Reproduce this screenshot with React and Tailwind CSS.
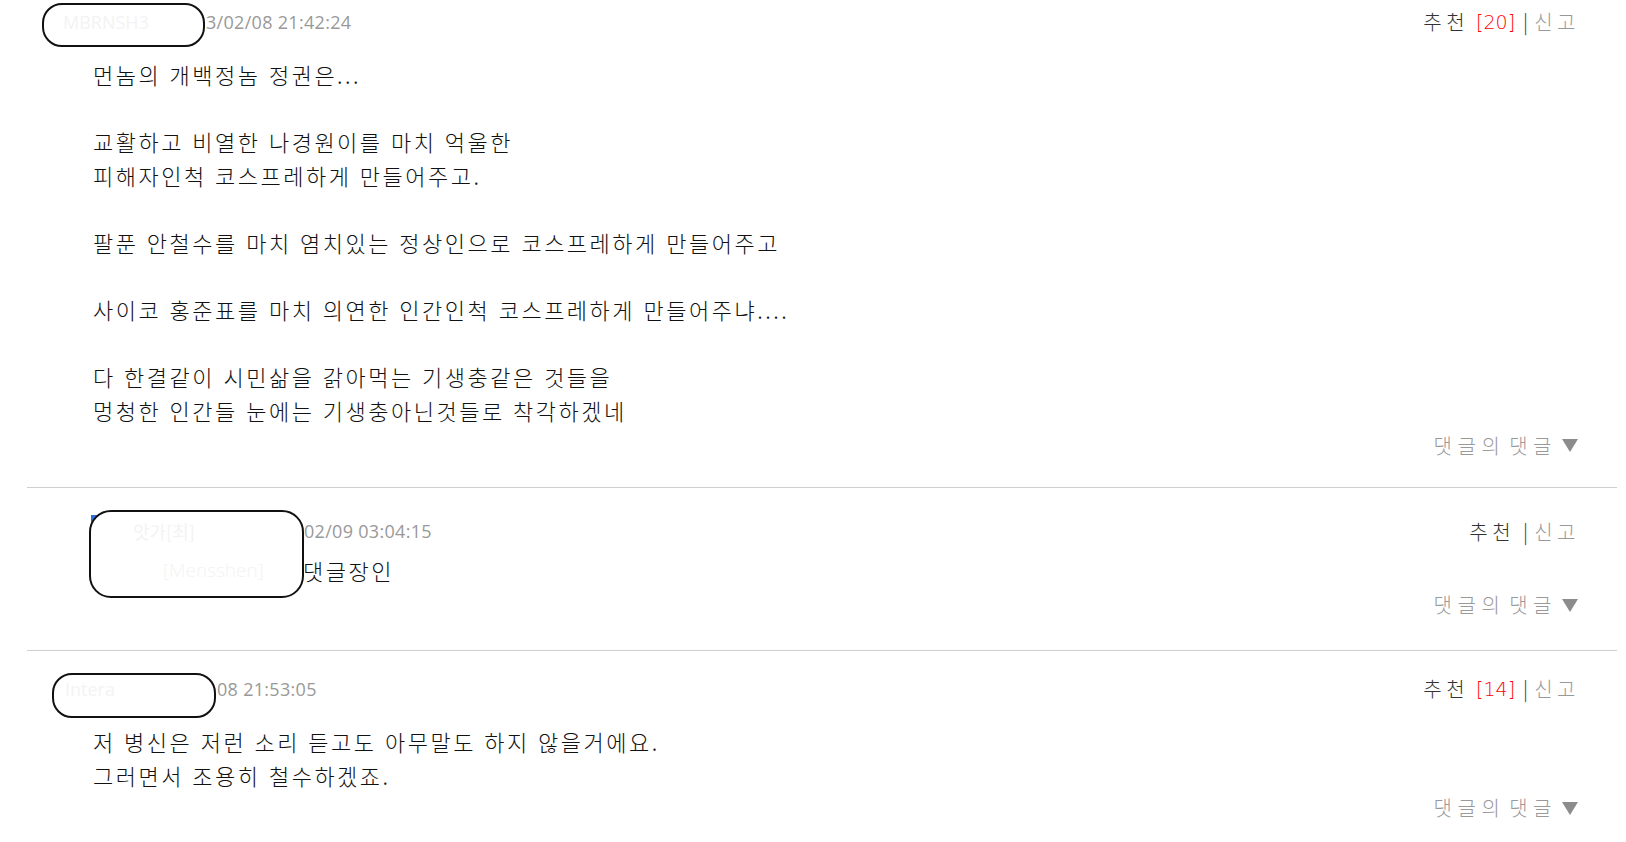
import { Fragment } from "react";

// 댓글 하단 "댓글의 댓글" 토글
function ReplyToggle({ className }) {
  return (
    <div className={"flex h-[30px] items-center justify-end pr-[39px] " + className}>
      <span className="text-[20px] font-light tracking-[5.5px] [word-spacing:-6px] text-[#999] font-['Noto_Sans_CJK_KR',sans-serif]">
        댓글의 댓글
      </span>
      <svg width="16" height="13" viewBox="0 0 16 13" className="ml-[5px]">
        <polygon points="0,0 16,0 8,13" fill="#8c8c8c" />
      </svg>
    </div>
  );
}

// 추천 / 신고
function Recommend({ count }) {
  return (
    <div className="ml-auto flex items-center pr-[37px] text-[20px] font-light font-['Noto_Sans_CJK_KR',sans-serif]">
      <span className="tracking-[4.5px] text-[#333]">추천</span>
      {count != null && (
        <span className="ml-[7px] text-[19px] text-[#ff0000] font-['DejaVu_Sans',sans-serif] font-extralight">
          [{count}]
        </span>
      )}
      <span className="ml-[8px] text-[#333]">|</span>
      <span className="ml-[6px] tracking-[4.5px] text-[#999]">신고</span>
    </div>
  );
}

// 가려진 아이디 박스
function Mask({ className }) {
  return <div className={"absolute z-10 rounded-[20px] border-2 border-[#111] bg-white " + className} />;
}

export default function App() {
  const first = [
    "먼놈의 개백정놈 정권은...",
    "",
    "교활하고 비열한 나경원이를 마치 억울한",
    "피해자인척 코스프레하게 만들어주고.",
    "",
    "팔푼 안철수를 마치 염치있는 정상인으로 코스프레하게 만들어주고",
    "",
    "사이코 홍준표를 마치 의연한 인간인척 코스프레하게 만들어주냐....",
    "",
    "다 한결같이 시민삶을 갉아먹는 기생충같은 것들을",
    "멍청한 인간들 눈에는 기생충아닌것들로 착각하겠네",
  ];
  const third = ["저 병신은 저런 소리 듣고도 아무말도 하지 않을거에요.", "그러면서 조용히 철수하겠죠."];

  const body =
    "pl-[66px] text-[22px] font-light leading-[33.6px] tracking-[2.5px] [word-spacing:1px] text-[#111] font-['Noto_Sans_CJK_KR',sans-serif]";

  return (
    <div className="h-[842px] w-[1626px] overflow-hidden bg-white">
      <div className="ml-[27px] w-[1590px]">
        {/* --- 댓글 1 --- */}
        <div className="relative border-b border-[#cfcfcf] pt-[7px] pb-[26px]">
          <Mask className="left-[15px] top-[3px] h-[44px] w-[163px]" />
          <div className="flex h-[30px] items-center">
            <span className="relative z-20 w-[179px] pl-[36px] text-[18px] text-[#f3f3f3] font-['Open_Sans',sans-serif]">
              MBRNSH3
            </span>
            <span className="relative z-20 text-[18px] tracking-[0.3px] text-[#999] font-['Open_Sans',sans-serif]">
              3/02/08 21:42:24
            </span>
            <Recommend count={20} />
          </div>
          <div className={"mt-[21px] " + body}>
            {first.map((line, i) => (
              <p key={i} className="h-[33.6px] whitespace-pre">
                {line}
              </p>
            ))}
          </div>
          <ReplyToggle className="mt-[3px]" />
        </div>

        {/* --- 댓글 2 (답글) --- */}
        <div className="relative border-b border-[#cfcfcf] pt-[29px] pb-[30px]">
          <div className="absolute left-[64px] top-[27px] h-[10px] w-[6px] bg-[#2f6fd6]" />
          <Mask className="left-[62px] top-[22px] h-[88px] w-[215px] rounded-[22px]" />
          <div className="flex h-[30px] items-center">
            <span className="relative z-20 w-[277px] pl-[106px] text-[18px] text-[#f3f3f3] font-['Noto_Sans_CJK_KR',sans-serif]">
              앗가[최]
            </span>
            <span className="relative z-20 text-[18px] tracking-[0.3px] text-[#999] font-['Open_Sans',sans-serif]">
              02/09 03:04:15
            </span>
            <Recommend />
          </div>
          <div className="mt-[7px] flex pl-[136px] text-[22px] font-light leading-[33.6px] tracking-[2.5px] text-[#111] font-['Noto_Sans_CJK_KR',sans-serif]">
            <span className="relative z-20 w-[140px] text-[19px] tracking-normal text-[#f3f3f3] font-['Open_Sans',sans-serif]">[Mensshen]</span>
            <span>댓글장인</span>
          </div>
          <ReplyToggle className="mt-[3px]" />
        </div>

        {/* --- 댓글 3 --- */}
        <div className="relative pt-[23px]">
          <Mask className="left-[25px] top-[22px] h-[45px] w-[164px]" />
          <div className="flex h-[30px] items-center">
            <span className="relative z-20 w-[190px] pl-[38px] text-[18px] text-[#f3f3f3] font-['Open_Sans',sans-serif]">
              Intera
            </span>
            <span className="relative z-20 text-[18px] tracking-[0.3px] text-[#999] font-['Open_Sans',sans-serif]">
              08 21:53:05
            </span>
            <Recommend count={14} />
          </div>
          <div className={"mt-[21px] " + body}>
            {third.map((line, i) => (
              <Fragment key={i}>
                <p className="h-[33.6px] whitespace-pre">{line}</p>
              </Fragment>
            ))}
          </div>
          <ReplyToggle className="mt-[1px]" />
        </div>
      </div>
    </div>
  );
}
